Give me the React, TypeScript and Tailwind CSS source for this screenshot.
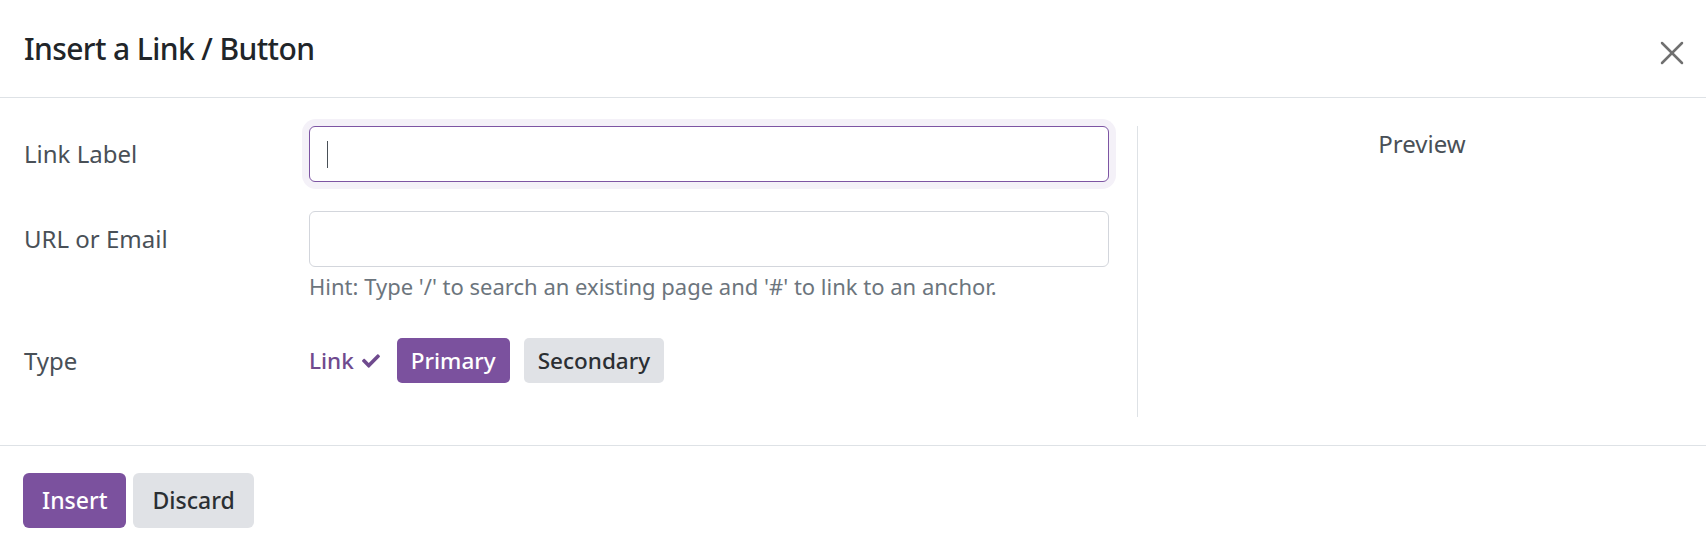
import { X } from 'lucide-react'

const font = { fontFamily: '"Noto Sans", "Open Sans", sans-serif' }

function CheckIcon() {
  return (
    <svg viewBox="0 0 512 512" className="h-[18px] w-[20px] fill-current">
      <path d="M173.9 439.4 7.5 273c-10-10-10-26.2 0-36.2l36.2-36.2c10-10 26.2-10 36.2 0L192 312.7 432.1 72.6c10-10 26.2-10 36.2 0l36.2 36.2c10 10 10 26.2 0 36.2L210.1 439.4c-10 10-26.2 10-36.2 0z" />
    </svg>
  )
}

export default function App() {
  return (
    <div className="min-h-[554px] w-full bg-white text-[24px] text-[#212529]" style={font}>
      {/* header */}
      <div className="flex h-[98px] items-center justify-between border-b border-[#dee2e6] pl-6 pr-[22px]">
        <h1 className="text-[30px] font-medium leading-none tracking-[-0.6px] text-[#212529]">Insert a Link / Button</h1>
        <button className="grid h-[32px] w-[32px] place-items-center text-[#707070]">
          <X size={40} strokeWidth={1.5} />
        </button>
      </div>

      {/* body */}
      <div className="flex pl-6 pt-[28px] pb-[28px]">
        <div className="w-[1085px]">
          <div className="flex items-center">
            <label className="w-[285px] leading-[36px] text-[#495057]">Link Label</label>
            <div className="flex-1 rounded-[7px] shadow-[0_0_0_7px_#f4f1f8]">
              <div className="flex h-[56px] items-center rounded-[6px] border border-[#7d55a3] px-[17px]">
                <span className="h-[27px] w-px bg-[#495057]" />
              </div>
            </div>
          </div>

          <div className="mt-[29px] flex">
            <label className="flex h-[56px] w-[285px] items-center leading-[36px] text-[#495057]">URL or Email</label>
            <div className="flex-1">
              <div className="h-[56px] rounded-[6px] border border-[#d3d6dc]" />
              <p className="mt-px text-[22px] leading-[36px] text-[#6c757d]">
                Hint: Type '/' to search an existing page and '#' to link to an anchor.
              </p>
            </div>
          </div>

          <div className="mt-[34px] flex items-center">
            <label className="w-[285px] leading-[36px] text-[#495057]">Type</label>
            <div className="flex items-center text-[22.5px]">
              <span className="flex items-center gap-[7px] font-medium text-[#6f4a8e]">
                Link <CheckIcon />
              </span>
              <button className="ml-[16px] h-[45px] rounded-[5px] bg-[#7b519e] px-[14px] font-medium text-white">Primary</button>
              <button className="ml-[14px] h-[45px] rounded-[5px] bg-[#e0e2e6] px-[14px] font-medium text-[#2b2f33]">Secondary</button>
            </div>
          </div>
          <div className="h-[34px]" />
        </div>

        <div className="ml-[28px] border-l border-[#dee2e6]" />

        <div className="flex-1 text-center leading-[36px] text-[#495057]">Preview</div>
      </div>

      {/* footer */}
      <div className="flex gap-[7px] border-t border-[#dee2e6] px-[23px] pt-[27px] text-[23px]">
        <button className="h-[55px] rounded-[6px] bg-[#7b519e] px-[19px] font-medium text-white">Insert</button>
        <button className="h-[55px] rounded-[6px] bg-[#e0e2e6] px-[19px] font-medium text-[#2b2f33]">Discard</button>
      </div>
    </div>
  )
}
